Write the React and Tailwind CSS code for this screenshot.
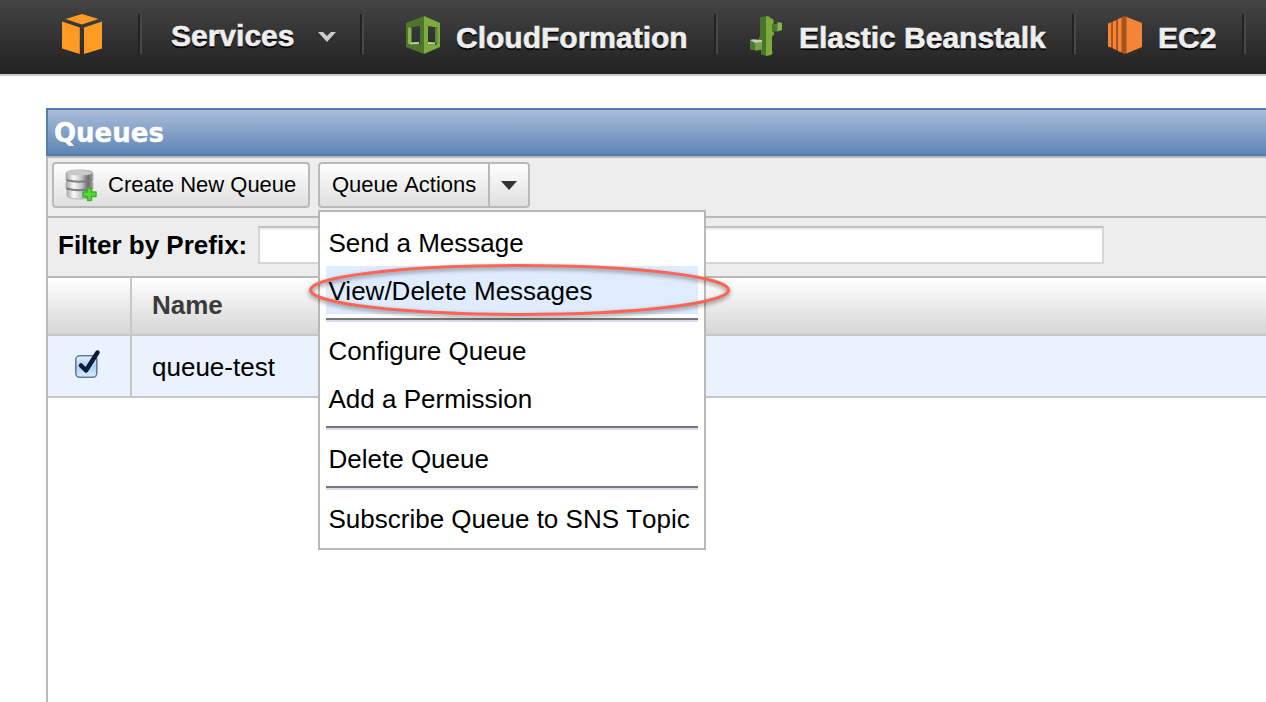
const AwsCube = () => (
  <svg width="40" height="40" viewBox="0 0 40 40" fill="#ff9a25">
    <path d="M20 0 36.500 5 20 10.500 3.500 5Z" />
    <path d="M0 7.500 17.800 13.500V40L0 34.500Z" />
    <path d="M40 7.500 22 13.500V40L40 34.500Z" />
  </svg>
);

const CloudFormationIcon = () => (
  <svg width="34" height="38" viewBox="0 0 34 38">
    <path fillRule="evenodd" fill="#4f7430" d="M18 0 0 7V31L18 38ZM4 11.500 14 10V28L4 28.500Z" />
    <path fillRule="evenodd" fill="#7dac3c" d="M18 0 34 7V31L18 38ZM22 10 31 11.500V28.500L22 28Z" />
    <path fill="#86b543" d="M2 11.500H5.500V27L2 28.500Z" />
    <path fill="#5b8434" d="M29 11.500 31.500 11V28.500L29 26.500Z" />
    <path fill="#b9d796" d="M4.500 26.500 13 26V28L4 28.500ZM22 26 29 26.500V28.300L22 28Z" />
  </svg>
);

const BeanstalkIcon = () => (
  <svg width="34" height="42" viewBox="0 0 34 42">
    <path fill="#4a732e" d="M10 1.500 16.500 0V40L11 38.500V34L9 33.500V21.500L10 20Z" />
    <path fill="#7cab3c" d="M16 0 20 1V2L23.500 3.500V8L22 9.500V15L24 16.500V18.500L22 20.500V34L22.500 37.500L21 39L16 40Z" />
    <path fill="#4e7931" d="M22 8H28V15.500H22ZM0 24 11 27V34L7 34.500 0 33.500Z" />
    <path fill="#86b540" d="M27.500 6 32 7V14L27.500 15.500Z" />
    <path fill="#79a14a" d="M5 26.500 12 25.500V33.500L5 34.500Z" />
    <path fill="#c6cdb8" d="M0 24 3 23.300 12 24V26L5 26.800Z" />
  </svg>
);

const Ec2Icon = () => (
  <svg width="34" height="38" viewBox="0 0 34 38">
    <path fill="#a9521d" d="M0 8 16 0 20 1V37L16 38 0 30Z" />
    <path fill="#f58536" d="M0 7.500 3 6.500V31.500L0 30.500ZM5 5.500 8 4.500V33.500L5 32.500ZM10 3 13.500 2V36L10 35ZM18.500 1 34 7V31L18.500 37.500Z" />
  </svg>
);

const DatabaseIcon = () => (
  <svg width="34" height="34" viewBox="0 0 34 34">
    <defs>
      <linearGradient id="metal" x1="0" x2="1">
        <stop offset="0" stopColor="#a2a2a2" />
        <stop offset=".28" stopColor="#fafafa" />
        <stop offset=".58" stopColor="#c4c4c4" />
        <stop offset=".82" stopColor="#686868" />
        <stop offset="1" stopColor="#a5a5a5" />
      </linearGradient>
    </defs>
    <path d="M2 5Q3 2 15.500 2T29 5V12L28 13 29 15V20L28 22V28Q26 31 15.500 31T3 28V22L2 20V15L3 13 2 12Z" fill="url(#metal)" stroke="#aaa" strokeWidth=".8" />
    <path d="M2.500 5Q4 2.300 15.500 2.300T28.500 5Q26 7.500 15.500 7.500T2.500 5Z" fill="#c9c9c9" />
    <path d="M2.500 12Q14 15.500 28 12M2.500 20.500Q14 24 28 20.500" stroke="#7d7d7d" strokeWidth="2" fill="none" />
    <path d="M23.500 20H27.500V24H32V28.500H27.500V32.500H23.500V28.500H19V24H23.500Z" fill="#5bd63a" stroke="#3eb02a" strokeWidth="1.400" strokeLinejoin="round" />
  </svg>
);

const CheckedBox = () => (
  <svg width="28" height="32" viewBox="0 0 28 32">
    <defs>
      <linearGradient id="box" x1="0" y1="0" x2="0" y2="1">
        <stop offset="0" stopColor="#e4f1fc" />
        <stop offset=".5" stopColor="#a9d0f4" />
        <stop offset="1" stopColor="#d2f0ff" />
      </linearGradient>
    </defs>
    <rect x="2.800" y="7.800" width="21" height="21.500" rx="4" fill="url(#box)" stroke="#6d7798" strokeWidth="1.600" />
    <path d="M8 17.500 13 22.500 24.500 4.500" fill="none" stroke="#0a1c38" strokeWidth="4.500" strokeLinecap="round" strokeLinejoin="round" />
  </svg>
);

const Divider = () => <div className="mt-3.5 h-10 w-1 shrink-0 border-l-2 border-r-2 border-l-[#222] border-r-[#494949]" />;

const navText = "text-[30px] leading-9 font-bold whitespace-nowrap text-[#eee] [text-shadow:0_2px_1px_#000] [-webkit-text-stroke:0.6px_#eee]";

const NavBar = () => (
  <header className="flex h-[76px] shrink-0 overflow-hidden border-b-2 border-[#c9c9c9] bg-linear-to-b from-[#444] to-[#222]">
    <div className="w-[138px] shrink-0 pt-3.5 pl-[62px]"><AwsCube /></div>
    <Divider />
    <div className="flex w-[218px] shrink-0 pl-[29px]">
      <span className={`${navText} mt-[18px] w-[147px]`}>Services</span>
      <svg className="mt-8" width="18" height="10" viewBox="0 0 18 10">
        <path d="M0 0H5L9 4 13 0H18L9 10Z" fill="#ccc" />
      </svg>
    </div>
    <Divider />
    <div className="flex w-[350px] shrink-0 gap-4 pt-4 pl-[42px]">
      <CloudFormationIcon /><span className={`${navText} mt-1`}>CloudFormation</span>
    </div>
    <Divider />
    <div className="flex w-[354px] shrink-0 gap-[15px] pt-4 pl-8">
      <BeanstalkIcon /><span className={`${navText} mt-1`}>Elastic Beanstalk</span>
    </div>
    <Divider />
    <div className="flex w-[166px] shrink-0 gap-4 pt-4 pl-8">
      <Ec2Icon /><span className={`${navText} mt-1`}>EC2</span>
    </div>
    <Divider />
  </header>
);

const MenuItem = ({ children, active }) => (
  <div className={`h-12 pl-[2.5px] text-[26px] leading-[50px] whitespace-nowrap ${active ? "bg-[#dfecfe]" : ""}`}>{children}</div>
);

const Separator = () => <div className="my-1 h-1 border-t-2 border-b-2 border-t-[#777] border-b-[#dcdaee]" />;

const ActionsMenu = () => (
  <div className="absolute top-12 left-0 z-10 h-[340px] w-[388px] border-2 border-[#b8b8b8] bg-white p-1.5">
    <MenuItem>Send a Message</MenuItem>
    <MenuItem active>View/Delete Messages</MenuItem>
    <Separator />
    <MenuItem>Configure Queue</MenuItem>
    <MenuItem>Add a Permission</MenuItem>
    <Separator />
    <MenuItem>Delete Queue</MenuItem>
    <Separator />
    <MenuItem><span className="[font-kerning:none]">Subscribe Queue to SNS Topic</span></MenuItem>
    <svg className="absolute -top-[2px] -left-[14px] overflow-visible" width="424" height="120" viewBox="0 0 424 120">
      <ellipse cx="213.500" cy="80" rx="209" ry="24.500" fill="none" stroke="#fa6555" strokeWidth="3" className="drop-shadow-[0_2px_2px_rgba(0,0,0,0.45)]" />
    </svg>
  </div>
);

const buttonBox = "flex h-[46px] rounded-[4px] border-2 border-[#b9b9b9] bg-linear-to-b from-white to-[#dfdfdf] text-[22px] leading-[41px] whitespace-nowrap [font-kerning:none]";

const Toolbar = () => (
  <div className="flex h-[60px] gap-2 border-b-2 border-[#b9b9b9] bg-[#ededed] pt-1 pl-1">
    <button className={`${buttonBox} w-[258px] gap-2.5 pl-2.5`}>
      <span className="mt-1"><DatabaseIcon /></span>
      <span>Create New Queue</span>
    </button>
    <div className="relative">
      <button className={`${buttonBox} w-[212px]`}>
        <span className="h-full w-[170px] border-r-2 border-[#b9b9b9] pl-3 text-left">Queue Actions</span>
        <span className="flex h-full flex-1 items-center justify-center">
          <svg width="16" height="9" viewBox="0 0 16 9"><path d="M0 0H16L8 9Z" fill="#333" /></svg>
        </span>
      </button>
      <ActionsMenu />
    </div>
  </div>
);

const FilterBar = () => (
  <div className="flex h-[60px] border-b-2 border-[#b9b9b9] bg-[#ededed] pt-2 pl-2.5">
    <label className="w-[200px] text-[26px] leading-[39px] font-bold whitespace-nowrap">Filter by Prefix:</label>
    <div className="h-[38px] w-[846px] border-2 border-[#d6d6d6] border-t-[#c0c0c0] bg-white shadow-[inset_0_2px_1px_#eee]" />
  </div>
);

const QueueTable = () => (
  <div>
    <div className="flex h-[58px] border-b-2 border-[#c7c7c7] bg-linear-to-b from-white to-[#d6d6d6] text-[26px] leading-[55px] font-bold text-[#3b3b3b]">
      <div className="w-[84px] border-r-2 border-[#c7c7c7]" />
      <div className="pl-5">Name</div>
    </div>
    <div className="flex h-[62px] border-b-2 border-[#c7c7c7] bg-[#eaf2fe] text-[26px] leading-[62px]">
      <div className="w-[84px] border-r-2 border-[#c7c7c7] pt-3 pl-[25px]"><CheckedBox /></div>
      <div className="pl-5">queue-test</div>
    </div>
  </div>
);

export default function App() {
  return (
    <div className="flex h-[702px] w-[1266px] flex-col overflow-hidden bg-white font-['Liberation_Sans',Arial,sans-serif] text-black">
      <NavBar />
      <main className="mt-8 ml-[46px] flex-1">
        <h1 className="h-12 border-2 border-r-0 border-[#517cad] bg-linear-to-b from-[#a9bdd9] to-[#5f86b6] pl-1.5 font-['DejaVu_Sans',sans-serif] text-[26px] leading-[47px] font-bold text-white [-webkit-text-stroke:0.4px_white]">Queues</h1>
        <section className="h-full border-t-2 border-l-2 border-[#b9b9b9]">
          <Toolbar />
          <FilterBar />
          <QueueTable />
        </section>
      </main>
    </div>
  );
}
